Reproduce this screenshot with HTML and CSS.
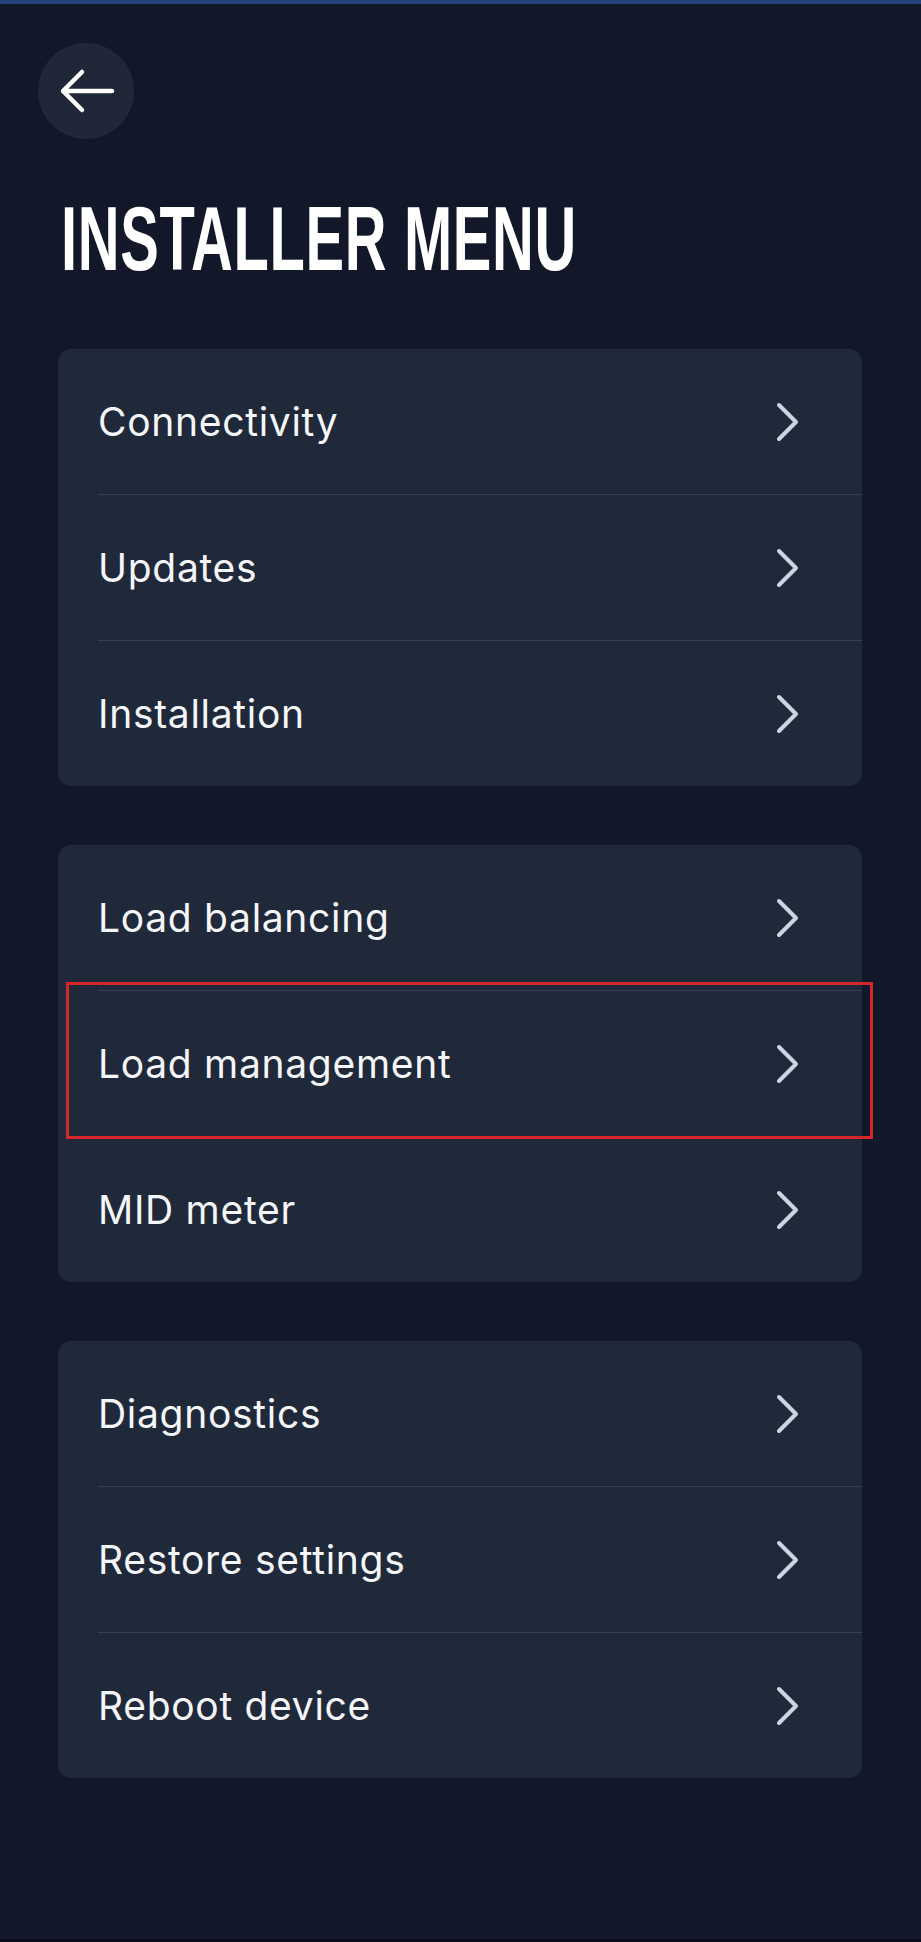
FILE: index.html
```html
<!DOCTYPE html>
<html lang="en">
<head>
<meta charset="utf-8">
<title>Installer menu</title>
<link rel="stylesheet" href="styles.css">
</head>
<body>
<div class="topbar"></div>
<main class="page">
  <button class="back" aria-label="Back">
    <svg width="96" height="96" viewBox="0 0 96 96" aria-hidden="true">
      <path d="M74 48 H25 M44 29 L25 48 L44 67" fill="none" stroke="#ffffff" stroke-width="4.5" stroke-linecap="round" stroke-linejoin="round"/>
    </svg>
  </button>
  <h1 class="title"><span>INSTALLER MENU</span></h1>

  <section class="card">
    <div class="row"><span class="label">Connectivity</span><svg class="chev" width="24" height="40" viewBox="0 0 24 40"><path d="M3 3 L20 20 L3 37" /></svg></div>
    <div class="row"><span class="label">Updates</span><svg class="chev" width="24" height="40" viewBox="0 0 24 40"><path d="M3 3 L20 20 L3 37" /></svg></div>
    <div class="row"><span class="label">Installation</span><svg class="chev" width="24" height="40" viewBox="0 0 24 40"><path d="M3 3 L20 20 L3 37" /></svg></div>
  </section>

  <section class="card">
    <div class="row"><span class="label">Load balancing</span><svg class="chev" width="24" height="40" viewBox="0 0 24 40"><path d="M3 3 L20 20 L3 37" /></svg></div>
    <div class="row"><span class="label">Load management</span><svg class="chev" width="24" height="40" viewBox="0 0 24 40"><path d="M3 3 L20 20 L3 37" /></svg></div>
    <div class="row"><span class="label">MID meter</span><svg class="chev" width="24" height="40" viewBox="0 0 24 40"><path d="M3 3 L20 20 L3 37" /></svg></div>
    <div class="highlight"></div>
  </section>

  <section class="card">
    <div class="row"><span class="label">Diagnostics</span><svg class="chev" width="24" height="40" viewBox="0 0 24 40"><path d="M3 3 L20 20 L3 37" /></svg></div>
    <div class="row"><span class="label">Restore settings</span><svg class="chev" width="24" height="40" viewBox="0 0 24 40"><path d="M3 3 L20 20 L3 37" /></svg></div>
    <div class="row"><span class="label">Reboot device</span><svg class="chev" width="24" height="40" viewBox="0 0 24 40"><path d="M3 3 L20 20 L3 37" /></svg></div>
  </section>
</main>
<div class="bottombar"></div>
</body>
</html>
```

FILE: styles.css
```css
html, body {
  margin: 0;
  padding: 0;
}

body {
  background: #121829;
  min-height: 1942px;
  display: flex;
  flex-direction: column;
  font-family: Inter, "Noto Sans", "DejaVu Sans", sans-serif;
  color: #f4f6fa;
}

.topbar {
  height: 4px;
  background: #24427a;
  flex: none;
}

.bottombar {
  margin-top: auto;
  height: 3px;
  background: #0a0d17;
  flex: none;
}

.page {
  padding: 39px 59px 0 58px;
  display: flex;
  flex-direction: column;
}

.back {
  width: 96px;
  height: 96px;
  margin-left: -20px;
  padding: 0;
  border: none;
  border-radius: 50%;
  background: #1f2738;
  display: flex;
  align-items: center;
  justify-content: center;
  cursor: pointer;
}

.back svg {
  display: block;
}

.title {
  margin: 54px 0 65px 3px;
  height: 91px;
  font-family: "Liberation Sans", sans-serif;
  font-weight: 700;
  font-size: 91px;
  line-height: 1;
  letter-spacing: 1px;
  color: #ffffff;
  white-space: nowrap;
}

.title span {
  display: inline-block;
  transform: scaleX(0.636);
  transform-origin: left center;
}

.card {
  position: relative;
  background: #202939;
  border-radius: 13px;
  margin-bottom: 59px;
}

.row {
  height: 145px;
  margin-left: 40px;
  padding-right: 64px;
  display: flex;
  align-items: center;
  justify-content: space-between;
}

.row + .row {
  border-top: 1px solid #363f51;
}

.label {
  font-size: 39px;
  font-weight: 400;
  letter-spacing: 0.7px;
  color: #f4f6fa;
}

.chev {
  display: block;
  margin-right: -2px;
}

.chev path {
  fill: none;
  stroke: #cdd5e3;
  stroke-width: 4;
  stroke-linecap: round;
  stroke-linejoin: round;
}

.highlight {
  position: absolute;
  left: 8px;
  top: 137px;
  width: 801px;
  height: 151px;
  border: 3px solid #d7262b;
  pointer-events: none;
}
```
